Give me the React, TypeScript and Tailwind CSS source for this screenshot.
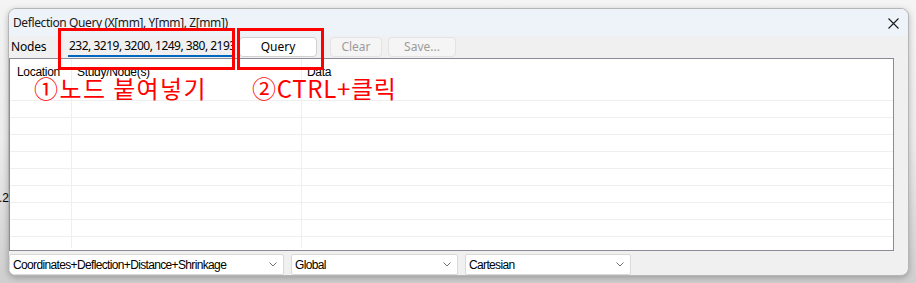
import React from 'react';

const ROWS = 9;

function Chevron() {
    return (
        <svg width="8" height="5" viewBox="0 0 8 5" className="shrink-0">
            <path d="M0.5 0.5 L4 4 L7.5 0.5" fill="none" stroke="#707070" strokeWidth="1" />
        </svg>
    );
}

function Select({ label, width }: { label: string; width: string }) {
    return (
        <div
            className={`${width} h-[21px] flex items-center justify-between bg-white border border-[#d9d9d9] rounded-[2px] pl-[3px] pr-[6px] text-[12px] text-black`}
            style={{ fontFamily: '"Liberation Sans", Arial, sans-serif' }}
        >
            <span className="tracking-[-0.65px] whitespace-nowrap">{label}</span>
            <Chevron />
        </div>
    );
}

export default function App() {
    const segoe = { fontFamily: '"Noto Sans", "Open Sans", sans-serif' };
    const tahoma = { fontFamily: '"Liberation Sans", Arial, sans-serif' };
    const korean = { fontFamily: '"Noto Sans CJK KR", "Noto Sans", sans-serif' };

    return (
        <div className="relative w-[916px] h-[283px] overflow-hidden bg-gradient-to-b from-[#f4f4f4] via-[#ececec] to-[#cfcfcf] pt-[8px] pl-[8px]">
            {/* something behind the window */}
            <span className="absolute left-[-1px] top-[189px] text-[12px] text-black" style={tahoma}>.2</span>

            <div className="w-[901px] h-[268px] flex flex-col rounded-[8px] border border-[#b5b5b5] bg-[#f0f0f0] overflow-hidden shadow-[0_2px_6px_rgba(0,0,0,0.25)]">
                {/* Title bar */}
                <div className="h-[27px] shrink-0 flex items-center justify-between bg-[#eef2f9] pl-[4px] pr-[9px]">
                    <span className="text-[12px] text-[#1a1a1a] pt-[1px] tracking-[-0.4px]" style={segoe}>
                        Deflection Query (X[mm], Y[mm], Z[mm])
                    </span>
                    <svg width="11" height="11" viewBox="0 0 11 11" className="mt-[1px]">
                        <path d="M0.5 0.5 L10.5 10.5 M10.5 0.5 L0.5 10.5" stroke="#1a1a1a" strokeWidth="1.1" />
                    </svg>
                </div>

                {/* Nodes row */}
                <div className="h-[22px] shrink-0 flex items-center pl-[2px]" style={segoe}>
                    <span className="w-[57px] text-[12px] text-black tracking-[-0.2px]">Nodes</span>
                    <div className="w-[164px] h-[20px] overflow-hidden border-b-2 border-[#0067c0] flex items-center">
                        <span className="whitespace-nowrap text-[12px] text-black pl-[1px] tracking-[-0.5px]">
                            232, 3219, 3200, 1249, 380, 2193, 2201
                        </span>
                    </div>
                    <div className="ml-[7px] w-[78px] h-[20px] flex items-center justify-center bg-white border border-[#d0d0d0] rounded-[4px] text-[12px] text-black">
                        Query
                    </div>
                    <div className="ml-[13px] w-[52px] h-[20px] flex items-center justify-center bg-[#f5f5f5] border border-[#e3e3e3] rounded-[4px] text-[12px] text-[#9c9c9c]">
                        Clear
                    </div>
                    <div className="ml-[6px] w-[68px] h-[20px] flex items-center justify-center bg-[#f5f5f5] border border-[#e3e3e3] rounded-[4px] text-[12px] text-[#9c9c9c]">
                        Save...
                    </div>
                </div>

                {/* Table */}
                <div className="w-[885px] h-[193px] shrink-0 flex flex-col bg-white border border-[#8b8b98] text-[12px] text-black" style={tahoma}>
                    <div className="h-[25px] flex">
                        <div className="w-[62px] pl-[7px] pt-[4px] border-r border-[#efefef] tracking-[-0.3px]">Location</div>
                        <div className="w-[230px] pl-[5px] pt-[4px] border-r border-[#efefef] tracking-[-0.3px]">Study/Node(s)</div>
                        <div className="flex-1 pl-[5px] pt-[4px] tracking-[-0.3px]">Data</div>
                    </div>
                    {Array.from({ length: ROWS }).map((_, i) => (
                        <div key={i} className="h-[17px] flex border-b border-[#efefef]">
                            <div className="w-[62px] border-r border-[#efefef]" />
                            <div className="w-[230px] border-r border-[#efefef]" />
                            <div className="flex-1" />
                        </div>
                    ))}
                    <div className="flex-1 flex pb-[2px]">
                        <div className="w-[62px] border-r border-[#efefef]" />
                        <div className="w-[230px] border-r border-[#efefef]" />
                        <div className="flex-1" />
                    </div>
                </div>

                {/* Bottom selects */}
                <div className="mt-[3px] flex gap-[7px]">
                    <Select label="Coordinates+Deflection+Distance+Shrinkage" width="w-[275px]" />
                    <Select label="Global" width="w-[167px]" />
                    <Select label="Cartesian" width="w-[166px]" />
                </div>
            </div>

            {/* Red annotations */}
            <div className="absolute left-[58px] top-[28px] w-[177px] h-[42px] border-[3px] border-[#ff0000]" />
            <div className="absolute left-[237px] top-[28px] w-[87px] h-[42px] border-[3px] border-[#ff0000]" />
            <div className="absolute left-[34px] top-[72px] text-[24px] leading-[32px] tracking-[1.4px] text-[#ff0000]" style={korean}>
                ①노드 붙여넣기
            </div>
            <div className="absolute left-[252px] top-[72px] text-[24px] leading-[32px] tracking-[0.7px] text-[#ff0000]" style={korean}>
                ②CTRL+클릭
            </div>
        </div>
    );
}
